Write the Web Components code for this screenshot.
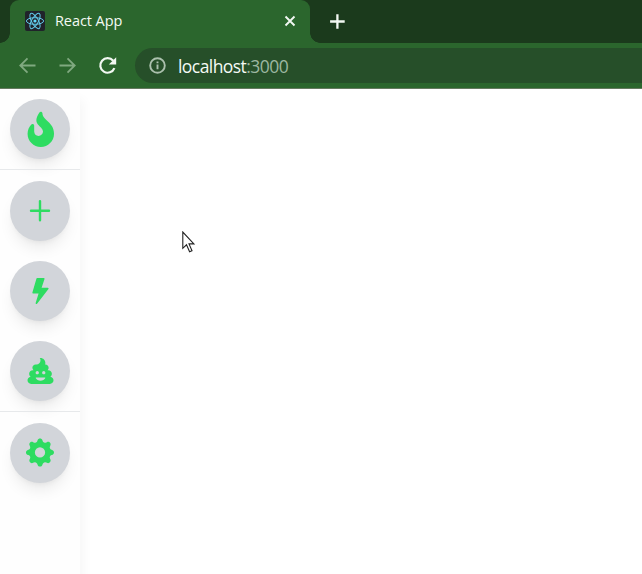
<!DOCTYPE html>
<html lang="en">
<head>
<meta charset="utf-8">
<title>React App</title>
<style>
  html, body { margin: 0; height: 100%; overflow: hidden; background: #fff; }
  body { font-family: "Open Sans", "Noto Sans", sans-serif; }
</style>
</head>
<body>
<app-window></app-window>
<script>
const define = (name, html) => customElements.define(name, class extends HTMLElement {
  constructor() {
    super();
    this.attachShadow({ mode: 'open' }).innerHTML = html;
  }
});

define('browser-tab', `
<style>
  :host { display: flex; align-items: center; box-sizing: border-box; width: 300px; height: 43px; margin-left: 10px; padding: 0 13px 1px 15px;
    background: #2b662d; border-radius: 9px 9px 0 0; color: #f4faf4; position: relative; }
  :host::before, :host::after { content: ""; position: absolute; bottom: 0; width: 10px; height: 10px; }
  :host::before { left: -10px; background: radial-gradient(circle at 0 0, transparent 9.5px, #2b662d 10px); }
  :host::after { right: -10px; background: radial-gradient(circle at 100% 0, transparent 9.5px, #2b662d 10px); }
  .logo { width: 20px; height: 20px; margin-right: 10px; background: #20232a; border-radius: 2px; }
  .title { flex: 1; font-size: 14.5px; line-height: 20px; letter-spacing: -0.08px; white-space: nowrap; }
  svg { display: block; }
</style>
<svg class="logo" viewBox="-10 -10 20 20" fill="none" stroke="#61c9e8" stroke-width="1">
  <ellipse rx="8.6" ry="3.3"/><ellipse rx="8.6" ry="3.3" transform="rotate(60)"/><ellipse rx="8.6" ry="3.3" transform="rotate(120)"/>
  <circle r="1.6" fill="#61dafb" stroke="none"/>
</svg>
<span class="title"><slot></slot></span>
<svg width="14" height="14" viewBox="0 0 14 14" stroke="#f2f8f2" stroke-width="1.9"><path d="M2.5 2.5l9 9M11.5 2.5l-9 9"/></svg>`);

define('tab-strip', `
<style>
  :host { display: flex; align-items: center; height: 43px; background: #1b3a1c; }
  svg { display: block; margin-left: 19px; }
</style>
<slot></slot>
<svg width="16" height="16" viewBox="0 0 16 16" stroke="#f2f8f2" stroke-width="2.3"><path d="M8.4 .2v14.6M1.1 7.5h14.6"/></svg>`);

define('address-bar', `
<style>
  :host { display: flex; align-items: center; flex: 1; box-sizing: border-box; height: 35px; padding-left: 14px; background: #264f29; border-radius: 18px 0 0 18px;
    color: #f5faf5; font-size: 17.5px; line-height: 24px; white-space: nowrap; }
  svg { display: block; margin-right: 12px; }
  span { letter-spacing: -0.56px; }
  ::slotted(i) { font-style: normal; color: #9db7a1; }
</style>
<svg width="17" height="17" viewBox="0 0 17 17" fill="none" stroke="#abc0ad" stroke-width="1.9"><circle cx="8.5" cy="8.5" r="7.3"/><path d="M8.5 7.5v4.8M8.5 4.4v1.9"/></svg>
<span><slot></slot></span>`);

define('tool-bar', `
<style>
  :host { display: flex; align-items: center; box-sizing: border-box; height: 46px; background: #2b662d; border-bottom: 1px solid #65795f; padding: 0 0 0 18px; }
  svg { display: block; flex: none; margin-right: 20px; }
  .reload { margin-right: 17px; }
</style>
<svg width="20" height="20" viewBox="0 0 20 20" fill="none" stroke="#80a980" stroke-width="1.8"><path d="M17.5 9.5H2.5M9.5 2.3L2.3 9.5l7.2 7.2"/></svg>
<svg width="20" height="20" viewBox="0 0 20 20" fill="none" stroke="#80a980" stroke-width="1.8"><path d="M1.5 9.5h15M9.5 2.3l7.2 7.2-7.2 7.2"/></svg>
<svg class="reload" width="20" height="20" viewBox="0 0 20 20"><path d="M16.4 12.1A7.3 7.3 0 1 1 15.2 4.7" fill="none" stroke="#f2f8f2" stroke-width="2.2"/><path d="M18.2 1.2v7.4h-7.4z" fill="#f2f8f2"/></svg>
<slot></slot>`);

define('side-icon', `
<style>
  :host { display: flex; align-items: center; justify-content: center; width: 60px; height: 60px; flex: none; border-radius: 50%; background: #d2d5da; color: #2edc61;
    box-shadow: 0 10px 15px -3px rgba(0,0,0,.08), 0 4px 6px -4px rgba(0,0,0,.08); }
  ::slotted(svg) { display: block; fill: currentColor; overflow: visible; }
</style>
<slot></slot>`);

define('side-divider', `
<style>:host { display: block; align-self: stretch; height: 1px; flex: none; background: #e7e9eb; }</style>`);

define('side-bar', `
<style>
  :host { display: flex; flex-direction: column; align-items: center; box-sizing: border-box; width: 80px; height: 485px; padding-top: 10px; background: #fefefe;
    box-shadow: 4px 10px 10px rgba(0,0,0,.035); }
  .group { display: flex; flex-direction: column; align-items: center; gap: 20.2px; padding: 10.6px 0 10px; }
  .last { margin-top: 11px; }
  side-divider.top { margin-top: 10px; }
</style>
<side-icon><svg width="26.5" height="35.3" viewBox="-8 -10 384 512"><path d="M216 23.86c0-23.8-30.65-32.77-44.15-13.04C48 191.85 224 200 224 288c0 35.63-29.11 64.46-64.85 63.99-35.17-.45-63.15-29.77-63.15-64.94v-85.51c0-21.7-26.47-32.23-41.43-16.5C27.8 213.16 0 261.33 0 320c0 105.87 86.13 192 192 192s192-86.13 192-192c0-170.29-168-193-168-296.14z"/></svg></side-icon>
<side-divider class="top"></side-divider>
<div class="group">
  <side-icon><svg width="20" height="20" viewBox="0 0.2 20 20"><path d="M8.8.3a1.2 1.2 0 0 1 2.4 0v8.5h7.8a1.2 1.2 0 0 1 0 2.4h-7.8v8.3a1.2 1.2 0 0 1-2.4 0v-8.3H1a1.2 1.2 0 0 1 0-2.4h7.8z"/></svg></side-icon>
  <side-icon><svg width="26" height="26" viewBox="-0.3 0 16 16"><path d="M5.52.359A.5.5 0 0 1 6 0h4a.5.5 0 0 1 .474.658L8.694 6H12.5a.5.5 0 0 1 .395.807l-7 9a.5.5 0 0 1-.873-.454L6.823 9.5H3.5a.5.5 0 0 1-.48-.641l2.5-8.5z"/></svg></side-icon>
  <side-icon><svg width="26" height="26" viewBox="-10 0 512 512"><path d="M451.4 369.1C468.7 356 480 335.4 480 312c0-39.8-32.2-72-72-72h-14.1c13.4-11.7 22.1-28.8 22.1-48 0-35.3-28.7-64-64-64h-5.9c3.6-10.1 5.9-20.7 5.9-32 0-53-43-96-96-96-5.2 0-10.2.7-15.1 1.5C250.3 14.6 256 30.6 256 48c0 44.2-35.8 80-80 80h-16c-35.3 0-64 28.7-64 64 0 19.2 8.7 36.3 22.1 48H104c-39.8 0-72 32.2-72 72 0 23.4 11.3 44 28.6 57.1C26.3 374.6 0 404.1 0 440c0 39.8 32.2 72 72 72h368c39.8 0 72-32.2 72-72 0-35.9-26.3-65.4-60.6-70.9zM192 256c17.7 0 32 14.3 32 32s-14.3 32-32 32-32-14.3-32-32 14.3-32 32-32zm159.5 139C341 422.9 293 448 256 448s-85-25.1-95.5-53c-2-5.3 2-11 7.8-11h175.4c5.8 0 9.8 5.7 7.8 11zM320 320c-17.7 0-32-14.3-32-32s14.3-32 32-32 32 14.3 32 32-14.3 32-32 32z"/></svg></side-icon>
</div>
<side-divider></side-divider>
<side-icon class="last"><svg width="28" height="28" viewBox="0 0.3 16 16"><path d="M9.405 1.05c-.413-1.4-2.397-1.4-2.81 0l-.1.34a1.464 1.464 0 0 1-2.105.872l-.31-.17c-1.283-.698-2.686.705-1.987 1.987l.169.311c.446.82.023 1.841-.872 2.105l-.34.1c-1.4.413-1.4 2.397 0 2.81l.34.1a1.464 1.464 0 0 1 .872 2.105l-.17.31c-.698 1.283.705 2.686 1.987 1.987l.311-.169a1.464 1.464 0 0 1 2.105.872l.1.34c.413 1.4 2.397 1.4 2.81 0l.1-.34a1.464 1.464 0 0 1 2.105-.872l.31.17c1.283.698 2.686-.705 1.987-1.987l-.169-.311a1.464 1.464 0 0 1 .872-2.105l.34-.1c1.4-.413 1.4-2.397 0-2.81l-.34-.1a1.464 1.464 0 0 1-.872-2.105l.17-.31c.698-1.283-.705-2.686-1.987-1.987l-.311.169a1.464 1.464 0 0 1-2.105-.872l-.1-.34zM8 10.93a2.929 2.929 0 1 1 0-5.86 2.929 2.929 0 0 1 0 5.858z"/></svg></side-icon>`);

define('mouse-pointer', `
<style>:host { display: block; position: absolute; left: 182px; top: 231px; } svg { display: block; }</style>
<svg width="14" height="23" viewBox="0 0 14 23"><path d="M.8 1v16.3l3.7-3.5 3.1 7 2.4-1-3-6.9h4.9z" fill="#fff" stroke="#222" stroke-width="1.1"/></svg>`);

define('app-window', `
<style>:host { display: block; height: 574px; overflow: hidden; background: #fff; }</style>
<tab-strip><browser-tab>React App</browser-tab></tab-strip>
<tool-bar><address-bar>localhost<i>:3000</i></address-bar></tool-bar>
<side-bar></side-bar>
<mouse-pointer></mouse-pointer>`);
</script>
</body>
</html>
